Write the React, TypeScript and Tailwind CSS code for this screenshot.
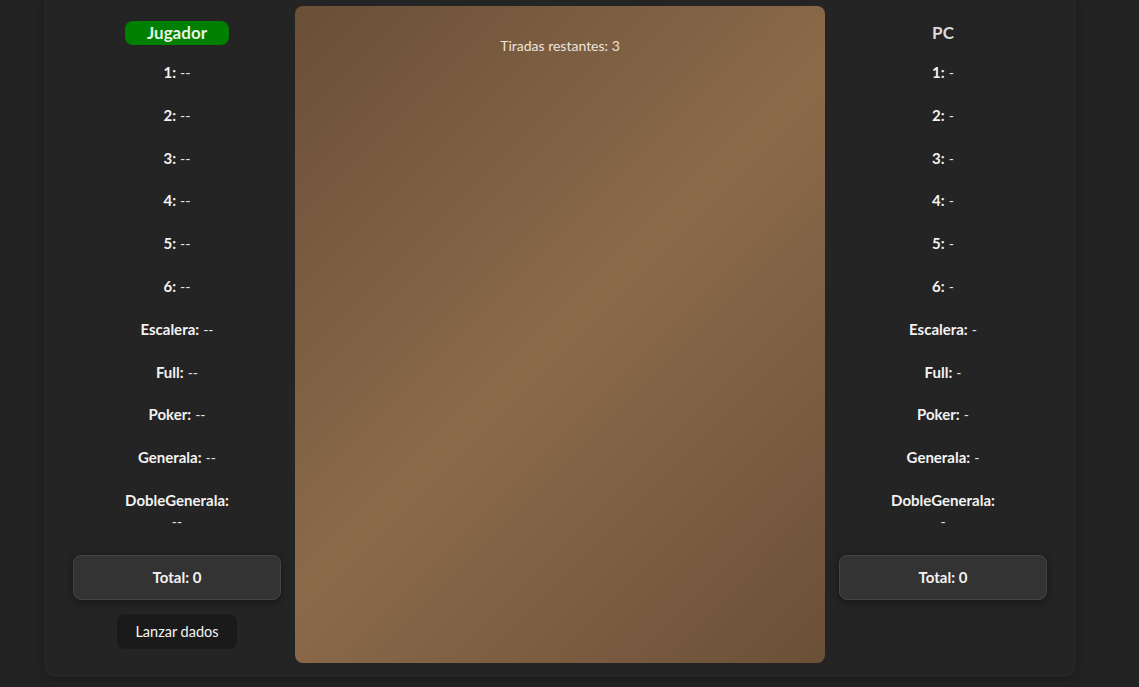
import React from "react";

const rows = ["1", "2", "3", "4", "5", "6", "Escalera", "Full", "Poker", "Generala", "DobleGenerala"];

function Column({ title, player, empty }: { title: string; player: boolean; empty: string }) {
  return (
    <div className="w-[208px] flex flex-col items-center pt-[21px]">
      {player ? (
        <div className="w-[104px] h-[24px] rounded-[8px] bg-[#008000] text-[#e6f3e6] text-[17px] font-bold leading-[24px] text-center">
          {title}
        </div>
      ) : (
        <div className="h-[24px] text-[#dcdcdc] text-[17px] font-bold leading-[24px] text-center">{title}</div>
      )}
      <div className="flex flex-col items-center gap-[20.8px] mt-[16px] text-[15px] leading-[22px] text-center">
        {rows.map((r) =>
          r === "DobleGenerala" ? (
            <div key={r} className="h-[44px] flex flex-col items-center">
              <div className="h-[22px] font-bold text-[#f2f2f2]">{r}:</div>
              <div className="h-[22px] text-[14px] text-[#e6e6e6]">{empty}</div>
            </div>
          ) : (
            <div key={r} className="h-[22px] flex items-baseline gap-[4px]">
              <span className="font-bold text-[#f2f2f2]">{r}:</span>
              <span className="text-[14px] text-[#e6e6e6]">{empty}</span>
            </div>
          )
        )}
      </div>
      <div className="mt-[22px] w-[208px] h-[45px] rounded-[8px] bg-[#333333] border border-[#444444] shadow-[0_2px_8px_rgba(0,0,0,0.45)] flex items-center justify-center text-[15px] font-bold text-[#f2f2f2]">
        Total: 0
      </div>
      {player && (
        <button className="mt-[14px] w-[120px] h-[35px] rounded-[8px] bg-[#1a1a1a] text-[14.5px] text-[#f5f5f5]">
          Lanzar dados
        </button>
      )}
    </div>
  );
}

export default function App() {
  return (
    <div
      className="w-[1139px] h-[687px] bg-[#222222] overflow-hidden"
      style={{ fontFamily: '"Segoe UI", Lato, "Noto Sans", sans-serif' }}
    >
      <div className="ml-[44px] w-[1032px] h-[677px] bg-[#242424] rounded-b-[10px] shadow-[0_2px_8px_rgba(0,0,0,0.25)] flex gap-[14px] px-[29px]">
        <Column title="Jugador" player empty="--" />
        <div className="mt-[6px] w-[530px] h-[657px] rounded-[8px] bg-[linear-gradient(135deg,#6a4f37_0%,#8b6a4a_50%,#6b5038_100%)] flex flex-col items-center">
          <div className="mt-[30px] text-[14px] leading-[20px] text-[#ece4da]">Tiradas restantes: 3</div>
        </div>
        <Column title="PC" player={false} empty="-" />
      </div>
    </div>
  );
}
